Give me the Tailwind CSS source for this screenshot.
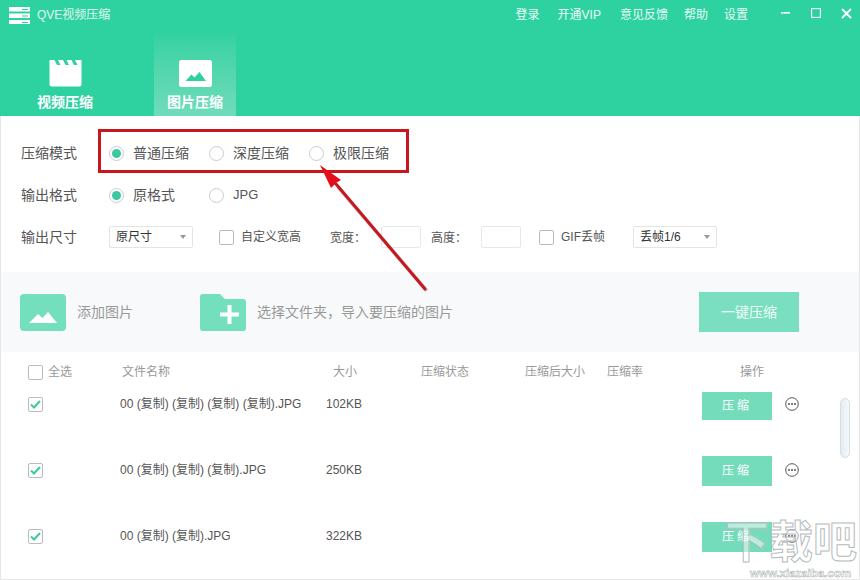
<!DOCTYPE html>
<html lang="zh-CN">

<head>
    <meta charset="UTF-8">
    <title>QVE视频压缩</title>
    <script src="https://cdn.jsdelivr.net/npm/@tailwindcss/browser@4"></script>
</head>

<body class="w-[860px] h-[580px] overflow-hidden bg-white text-[14px] text-[#555] font-['Liberation_Sans','Noto_Sans_CJK_SC',sans-serif]">
    <div class="relative w-[860px] h-[580px] flex flex-col overflow-hidden">
        <!-- header -->
        <header class="h-[116px] shrink-0 bg-[#2ed1a0] text-white flex flex-col">
            <div class="h-[30px] flex items-center pl-[9px] pr-[9px]">
                <svg width="22" height="17" viewBox="0 0 22 17" fill="#fff">
                    <rect x="0" y="0" width="21" height="4.500" />
                    <rect x="0" y="6.500" width="21" height="4.500" />
                    <rect x="0" y="13" width="21" height="4.500" />
                    <rect x="13" y="2" width="6" height="1" fill="#2ed1a0" />
                    <rect x="13" y="8.500" width="6" height="1" fill="#2ed1a0" />
                    <rect x="13" y="15" width="6" height="1" fill="#2ed1a0" />
                </svg>
                <span class="ml-[6px] text-[12px] text-white/85">QVE视频压缩</span>
                <nav class="ml-auto flex items-center text-[12px] text-white/90">
                    <span class="mr-[18px]">登录</span>
                    <span class="mr-[19px]">开通VIP</span>
                    <span class="mr-[16px]">意见反馈</span>
                    <span class="mr-[16px]">帮助</span>
                    <span class="mr-[33px]">设置</span>
                </nav>
                <div class="flex items-center gap-[20px] mb-[4px] mr-[-1px]">
                    <svg width="10" height="10" viewBox="0 0 10 10"><rect x="0" y="4" width="9" height="1.600" fill="#fff" /></svg>
                    <svg width="10" height="10" viewBox="0 0 10 10"><rect x="0.600" y="0.600" width="8.800" height="8.800" fill="none" stroke="#fff" stroke-width="1.100" /></svg>
                    <svg width="11" height="11" viewBox="0 0 11 11"><path d="M1 1 10 10M10 1 1 10" stroke="#fff" stroke-width="1.800" /></svg>
                </div>
            </div>
            <div class="flex-1 flex pl-[16px] min-h-0">
                <div class="w-[98px] flex flex-col items-center pt-[30px]">
                    <svg width="33" height="27" viewBox="0 0 33 27" fill="#fff">
                        <path d="M1.500 0h4l2.500 5h3.500L9 0h5l2.500 5h3.500L17.500 0h5l2.500 5h3.500L26 0h6.500v24.500a2 2 0 0 1-2 2H2.500a2 2 0 0 1-2-2V1.500a1 1 0 0 1 1-1.500z" />
                    </svg>
                    <span class="mt-[7px] text-[14px] font-bold leading-[17px]">视频压缩</span>
                </div>
                <div class="ml-[40px] w-[82px] flex flex-col items-center pt-[30px] bg-gradient-to-b from-[#2ed1a0] to-[#6fdcbb]">
                    <svg width="33" height="27" viewBox="0 0 33 27">
                        <rect width="33" height="27" rx="2.500" fill="#fff" />
                        <path d="M6.500 21 12.500 14.500 15.500 17.500 20.500 12 27 21z" fill="#2ed1a0" />
                    </svg>
                    <span class="mt-[7px] text-[14px] font-bold leading-[17px]">图片压缩</span>
                </div>
            </div>
        </header>

        <!-- options -->
        <section class="h-[156px] shrink-0 pl-[21px] pt-[25px] flex flex-col shadow-[inset_1px_0_0_#e6e6e6,inset_-1px_0_0_#e6e6e6]">
            <div class="h-[24px] flex items-center">
                <span class="w-[88px]">压缩模式</span>
                <span class="w-[100px] flex items-center"><span class="w-[15px] h-[15px] rounded-full border border-[#ccc] flex items-center justify-center"><span class="w-[9px] h-[9px] rounded-full bg-[#3cc8a0]"></span></span><span class="ml-[9px]">普通压缩</span></span>
                <span class="w-[100px] flex items-center"><span class="w-[15px] h-[15px] rounded-full border border-[#ccc]"></span><span class="ml-[9px]">深度压缩</span></span>
                <span class="flex items-center"><span class="w-[15px] h-[15px] rounded-full border border-[#ccc]"></span><span class="ml-[9px]">极限压缩</span></span>
            </div>
            <div class="h-[24px] mt-[18px] flex items-center">
                <span class="w-[88px]">输出格式</span>
                <span class="w-[100px] flex items-center"><span class="w-[15px] h-[15px] rounded-full border border-[#ccc] flex items-center justify-center"><span class="w-[9px] h-[9px] rounded-full bg-[#3cc8a0]"></span></span><span class="ml-[9px]">原格式</span></span>
                <span class="flex items-center"><span class="w-[15px] h-[15px] rounded-full border border-[#ccc]"></span><span class="ml-[9px] text-[13px]">JPG</span></span>
            </div>
            <div class="h-[24px] mt-[18px] flex items-center text-[12px]">
                <span class="w-[88px] text-[14px]">输出尺寸</span>
                <span class="w-[84px] h-[22px] border border-[#e4e4e4] rounded-[2px] flex items-center pl-[6px] text-[#333]">原尺寸<span class="ml-auto mr-[6px] w-0 h-0 border-x-[3px] border-x-transparent border-t-[4px] border-t-[#999]"></span></span>
                <span class="ml-[26px] w-[15px] h-[15px] border border-[#bbb] rounded-[2px]"></span>
                <span class="ml-[7px] w-[89px]">自定义宽高</span>
                <span class="w-[51px]">宽度<span class="font-['Noto_Sans_CJK_TC']">：</span></span>
                <span class="w-[40px] h-[22px] border border-[#e8e8e8] rounded-[2px]"></span>
                <span class="ml-[10px] w-[50px]">高度<span class="font-['Noto_Sans_CJK_TC']">：</span></span>
                <span class="w-[40px] h-[22px] border border-[#e8e8e8] rounded-[2px]"></span>
                <span class="ml-[18px] w-[15px] h-[15px] border border-[#bbb] rounded-[2px]"></span>
                <span class="ml-[7px] w-[72px]">GIF丢帧</span>
                <span class="w-[84px] h-[22px] border border-[#e4e4e4] rounded-[2px] flex items-center pl-[6px] text-[#333]">丢帧1/6<span class="ml-auto mr-[6px] w-0 h-0 border-x-[3px] border-x-transparent border-t-[4px] border-t-[#999]"></span></span>
            </div>
        </section>

        <!-- toolbar -->
        <section class="h-[80px] shrink-0 bg-[#f7f9fa] flex items-center pl-[20px] text-[#999] shadow-[inset_1px_0_0_#e6e6e6,inset_-1px_0_0_#e6e6e6]">
            <svg width="46" height="37" viewBox="0 0 46 37">
                <rect width="46" height="37" rx="4" fill="#73dfbd" />
                <path d="M9 29 18 20 22.500 24 28 18 37 29z" fill="#fff" />
            </svg>
            <span class="ml-[11px] w-[123px]">添加图片</span>
            <svg width="46" height="37" viewBox="0 0 46 37">
                <path d="M0 3a3 3 0 0 1 3-3h17l5 5h18a3 3 0 0 1 3 3v26a3 3 0 0 1-3 3H3a3 3 0 0 1-3-3z" fill="#73dfbd" />
                <path d="M27.500 11h4v7.500H39v4h-7.500V30h-4v-7.500H20v-4h7.500z" fill="#fff" />
            </svg>
            <span class="ml-[11px] w-[442px]">选择文件夹<span class="font-['Noto_Sans_CJK_TC']">，</span>导入要压缩的图片</span>
            <span class="w-[100px] h-[40px] bg-[#79dfc0] text-white/90 flex items-center justify-center">一键压缩</span>
        </section>

        <!-- file table -->
        <section class="flex-1 min-h-0 relative text-[12px] shadow-[inset_1px_0_0_#e6e6e6,inset_-1px_0_0_#e6e6e6,inset_0_-1px_0_#e6e6e6]">
            <div class="h-[38px] pt-[2px] flex items-center text-[#999]">
                <span class="ml-[28px] w-[15px] h-[15px] border border-[#bbb] rounded-[2px]"></span>
                <span class="ml-[5px] w-[74px]">全选</span>
                <span class="w-[211px]">文件名称</span>
                <span class="w-[88px]">大小</span>
                <span class="w-[104px]">压缩状态</span>
                <span class="w-[82px]">压缩后大小</span>
                <span class="w-[133px]">压缩率</span>
                <span>操作</span>
            </div>
            <div class="flex flex-col gap-[38px]">
                <div class="h-[28px] flex items-center">
                    <span class="ml-[28px] w-[15px] h-[15px] border border-[#bbb] rounded-[2px] flex items-center justify-center"><svg width="11" height="9" viewBox="0 0 11 9"><path d="M1 4.500 4 7.500 10 1" fill="none" stroke="#3cc8a0" stroke-width="2" /></svg></span>
                    <span class="ml-[77px] w-[206px]">00 (复制) (复制) (复制) (复制).JPG</span>
                    <span class="w-[376px]">102KB</span>
                    <span class="w-[70px] h-[28px] mt-[4px] bg-[#74dcbb] text-white flex items-center justify-center tracking-[3px]">压缩</span>
                    <svg class="ml-[13px]" width="14" height="14" viewBox="0 0 14 14"><circle cx="7" cy="7" r="6.300" fill="none" stroke="#555" /><circle cx="4" cy="7" r="1" fill="#555" /><circle cx="7" cy="7" r="1" fill="#555" /><circle cx="10" cy="7" r="1" fill="#555" /></svg>
                </div>
                <div class="h-[28px] flex items-center">
                    <span class="ml-[28px] w-[15px] h-[15px] border border-[#bbb] rounded-[2px] flex items-center justify-center"><svg width="11" height="9" viewBox="0 0 11 9"><path d="M1 4.500 4 7.500 10 1" fill="none" stroke="#3cc8a0" stroke-width="2" /></svg></span>
                    <span class="ml-[77px] w-[206px]">00 (复制) (复制) (复制).JPG</span>
                    <span class="w-[376px]">250KB</span>
                    <span class="w-[70px] h-[30px] mt-[2px] bg-[#74dcbb] text-white flex items-center justify-center tracking-[3px]">压缩</span>
                    <svg class="ml-[13px]" width="14" height="14" viewBox="0 0 14 14"><circle cx="7" cy="7" r="6.300" fill="none" stroke="#555" /><circle cx="4" cy="7" r="1" fill="#555" /><circle cx="7" cy="7" r="1" fill="#555" /><circle cx="10" cy="7" r="1" fill="#555" /></svg>
                </div>
                <div class="h-[28px] flex items-center">
                    <span class="ml-[28px] w-[15px] h-[15px] border border-[#bbb] rounded-[2px] flex items-center justify-center"><svg width="11" height="9" viewBox="0 0 11 9"><path d="M1 4.500 4 7.500 10 1" fill="none" stroke="#3cc8a0" stroke-width="2" /></svg></span>
                    <span class="ml-[77px] w-[206px]">00 (复制) (复制).JPG</span>
                    <span class="w-[376px]">322KB</span>
                    <span class="w-[70px] h-[30px] mt-[2px] bg-[#74dcbb] text-white flex items-center justify-center tracking-[3px]">压缩</span>
                    <svg class="ml-[13px]" width="14" height="14" viewBox="0 0 14 14"><circle cx="7" cy="7" r="6.300" fill="none" stroke="#555" /><circle cx="4" cy="7" r="1" fill="#555" /><circle cx="7" cy="7" r="1" fill="#555" /><circle cx="10" cy="7" r="1" fill="#555" /></svg>
                </div>
            </div>
            <!-- scrollbar -->
            <div class="absolute left-[840px] top-[46px] w-[10px] h-[60px] rounded-full border border-[#d5dde5] bg-gradient-to-r from-[#e4ecf2] to-[#f6f9fb]"></div>
        </section>

        <!-- annotation -->
        <div class="absolute left-[98px] top-[129px] w-[311px] h-[44px] border-[3px] border-[#c8161e]"></div>
        <svg class="absolute left-[300px] top-[160px]" width="140" height="140" viewBox="0 0 140 140">
            <path d="M127 131 38 27" stroke="#000" stroke-opacity="0.18" stroke-width="4" />
            <path d="M125 129 36 24" stroke="#c8161e" stroke-width="3" stroke-linecap="round" />
            <path d="M20 5 41 20 36 23 31 28z" fill="#e3101c" />
        </svg>

        <!-- watermark -->
        <div class="absolute left-[725px] top-[521px] text-[44px] leading-none font-bold text-white/50 [-webkit-text-stroke:1px_#b5bcbc]">下载吧</div>
        <div class="absolute left-[750px] bottom-[1px] text-[11.500px] leading-none font-bold text-white/70 [-webkit-text-stroke:0.5px_#a8b0b0]">www.xiazaiba.com</div>
    </div>
</body>

</html>
